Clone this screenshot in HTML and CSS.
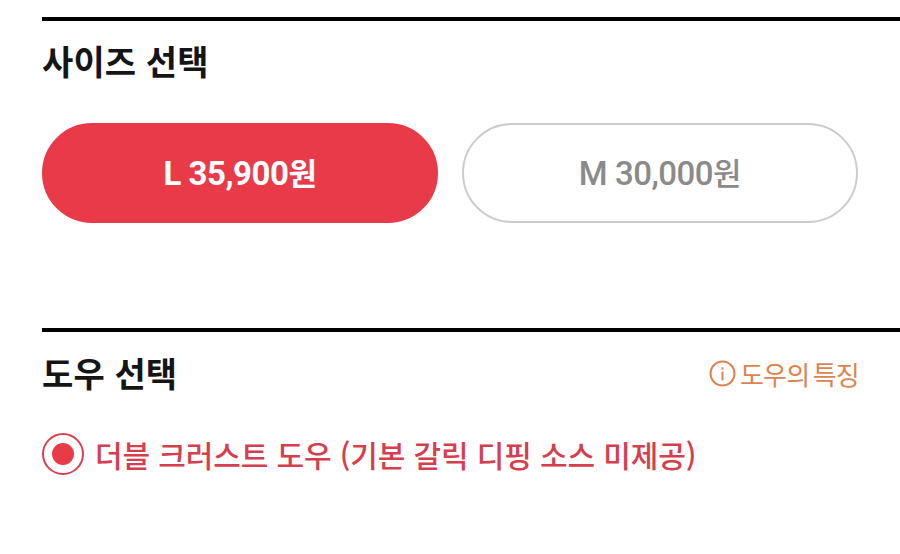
FILE: index.html
```html
<!DOCTYPE html>
<html lang="ko">
<head>
<meta charset="utf-8">
<title>옵션 선택</title>
<link rel="stylesheet" href="styles.css">
</head>
<body>
<main class="page">
  <section class="section section-size">
    <h2 class="title">사이즈 선택</h2>
    <div class="sizes">
      <button class="size size-on"><span class="lat">L 35,900</span>원</button>
      <button class="size"><span class="lat">M 30,000</span>원</button>
    </div>
  </section>
  <section class="section section-dough">
    <div class="head">
      <h2 class="title">도우 선택</h2>
      <a class="info">
        <svg class="info-icon" viewBox="0 0 28 28" aria-hidden="true">
          <circle cx="14" cy="14" r="12.4" fill="none" stroke="#dc8450" stroke-width="2.2"/>
          <rect x="13" y="12" width="2" height="9" fill="#dc8450"/>
          <rect x="13" y="7.6" width="2" height="2.4" fill="#dc8450"/>
        </svg>
        <span class="info-text">도우의 특징</span>
      </a>
    </div>
    <div class="option">
      <span class="radio"><span class="dot"></span></span>
      <span class="label">더블 크러스트 도우 (기본 갈릭 디핑 소스 미제공)</span>
    </div>
  </section>
</main>
</body>
</html>
```
FILE: styles.css
```css
* { box-sizing: border-box; }
html, body { margin: 0; padding: 0; background: #fff; }
body {
  width: 900px;
  height: 554px;
  overflow: hidden;
  font-family: "Noto Sans CJK KR", "Noto Sans", sans-serif;
}
.page { padding: 17px 0 0 42px; }
.section { border-top: 4px solid #000; }
.section-size { height: 311px; }
.title {
  margin: 0;
  font-size: 34px;
  line-height: 44px;
  font-weight: 700;
  color: #151515;
  letter-spacing: 0.1px;
}
.section-size .title { padding-top: 18px; height: 62px; }
.sizes {
  display: flex;
  gap: 24px;
  padding-top: 40px;
}
.size {
  width: 396px;
  height: 100px;
  border: 2px solid #cccccc;
  border-radius: 50px;
  background: #fff;
  color: #8a8a8a;
  font-family: inherit;
  font-size: 31px;
  font-weight: 500;
  letter-spacing: -0.5px;
  padding: 0 0 4px;
}
.size-on {
  border-color: #e93a49;
  background: #e93a49;
  color: #fff;
  font-weight: 700;
}
.lat { font-family: Roboto, sans-serif; font-size: 33px; }
.head {
  display: flex;
  justify-content: space-between;
  align-items: center;
  padding: 19px 41px 0 0;
}
.info {
  display: flex;
  align-items: center;
  gap: 4px;
  color: #dc8450;
  font-size: 26px;
  line-height: 34px;
  letter-spacing: -0.8px;
  word-spacing: -3px;
}
.info-text { padding-top: 2px; }
.info-icon { width: 27px; height: 27px; }
.option {
  display: flex;
  align-items: center;
  gap: 11px;
  margin-top: 38px;
}
.radio {
  display: flex;
  align-items: center;
  justify-content: center;
  width: 42px;
  height: 42px;
  border: 2px solid #d9404f;
  border-radius: 50%;
}
.dot {
  width: 22px;
  height: 22px;
  border-radius: 50%;
  background: #e93a49;
}
.label {
  font-size: 30px;
  line-height: 42px;
  font-weight: 500;
  color: #d63e4e;
  letter-spacing: -0.12px;
}
```
